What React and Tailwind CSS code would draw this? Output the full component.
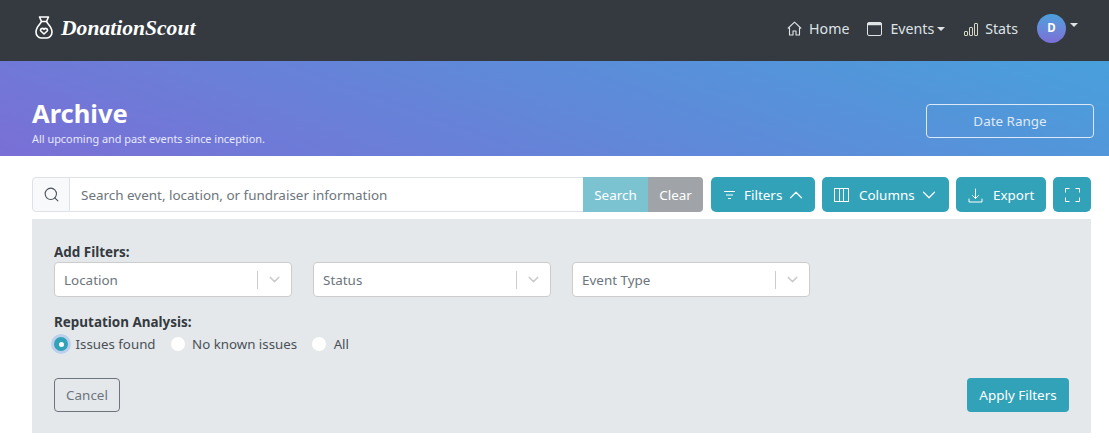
import React from "react";
import { ChevronDown, ChevronUp, Search } from "lucide-react";

const BagLogo = () => (
  <svg width="18" height="23" viewBox="0 0 18 23" fill="none" stroke="white" strokeWidth="1.6" strokeLinecap="round" strokeLinejoin="round">
    <path d="M4.500 1h9l-2 4.500h-5z" />
    <path d="M6.500 5.500c-.5 2-5.500 5-5.500 10.500 0 3.500 2.500 6 5 6h6c2.500 0 5-2.500 5-6 0-5.500-5-8.500-5.500-10.500" />
    <path d="M9 18l-3.200-3c-1.300-1.800 1.800-3.800 3.200-1.600 1.400-2.200 4.500-.2 3.200 1.600z" />
  </svg>
);

const HomeIcon = () => (
  <svg width="15" height="15" viewBox="0 0 15 15" fill="none" stroke="#dfe3e6" strokeWidth="1.1" strokeLinejoin="round">
    <path d="M.8 7.500 7.500 1.200l6.700 6.300" />
    <path d="M2.500 6.500v7.500h3.500v-4h3v4h3.500V6.500" />
  </svg>
);

const CalendarIcon = () => (
  <svg width="15" height="15" viewBox="0 0 15 15" fill="none" stroke="#dfe3e6">
    <rect x=".5" y="1.500" width="14" height="13" rx="1.500" />
    <path d="M.5 3h14" strokeWidth="2.500" />
  </svg>
);

const StatsIcon = () => (
  <svg width="14" height="14" viewBox="0 0 14 14" fill="none" stroke="#d8d6c4">
    <rect x=".5" y="9.500" width="3" height="4" rx=".5" />
    <rect x="5.500" y="5.500" width="3" height="8" rx=".5" />
    <rect x="10.500" y="1.500" width="3" height="12" rx=".5" />
  </svg>
);

const Caret = () => (
  <span className="inline-block h-0 w-0 border-x-[4.5px] border-t-[4.5px] border-x-transparent border-t-[#dfe3e6]" />
);

const FilterIcon = () => (
  <svg width="11" height="10" viewBox="0 0 11 10" fill="none" stroke="white" strokeWidth="1.2">
    <path d="M0 1.500h11M2 5h7M4 8.500h3" />
  </svg>
);

const ColumnsIcon = () => (
  <svg width="15" height="14" viewBox="0 0 15 14" fill="none" stroke="white">
    <rect x=".5" y=".5" width="14" height="13" />
    <path d="M5.500 .5v13M9.500 .5v13" />
  </svg>
);

const DownloadIcon = () => (
  <svg width="15" height="15" viewBox="0 0 15 15" fill="none" stroke="white" strokeLinecap="round" strokeLinejoin="round">
    <path d="M7.500 1v9.500M4.500 7.500l3 3 3-3" />
    <path d="M1 11v3h13v-3" />
  </svg>
);

const ExpandIcon = () => (
  <svg width="15" height="14" viewBox="0 0 15 14" fill="none" stroke="white">
    <path d="M.5 4.500V.5h4M10.500 .5h4v4M14.500 9.500v4h-4M4.500 13.500h-4v-4" />
  </svg>
);

const FilterSelect = ({ label }) => (
  <div className="flex h-[35px] w-[238px] items-center rounded border border-[#ccc] bg-white pl-[9px] pr-[8px]">
    <span className="flex-1 pt-px text-[13.44px] text-[#6c757d]">{label}</span>
    <span className="h-[18px] w-px bg-[#ccc]" />
    <ChevronDown size={17} strokeWidth={2} className="ml-[8px] text-[#ccc]" />
  </div>
);

const Radio = ({ label, checked }) => (
  <label className="flex items-center gap-[7.5px] text-[13.3px] text-[#495057]">
    {checked ? (
      <span className="flex h-[14px] w-[14px] items-center justify-center rounded-full bg-[#31a2b8] shadow-[0_0_0_3px_#bcd0ee]">
        <span className="h-[5px] w-[5px] rounded-full bg-white" />
      </span>
    ) : (
      <span className="h-[14px] w-[14px] rounded-full bg-white" />
    )}
    {label}
  </label>
);

const ToolButton = ({ children, className = "" }) => (
  <button className={`flex h-[35px] items-center rounded-[5px] bg-[#31a2b8] pt-px text-[13.44px] text-white ${className}`}>
    {children}
  </button>
);

export default function App() {
  return (
    <div className="h-[441px] overflow-hidden bg-white font-['Noto_Sans',sans-serif]">
      <nav className="flex h-[61px] items-center justify-between bg-[#343a40] pb-[5px] pl-[35px] pr-[31px]">
        <div className="flex items-center gap-[8px]">
          <BagLogo />
          <span className="font-['Liberation_Serif',serif] text-[21.6px] font-bold italic text-white">DonationScout</span>
        </div>
        <div className="flex items-center text-[14.2px] text-[#dfe3e6]">
          <span className="mt-[2px] flex items-center gap-[7px]"><HomeIcon />Home</span>
          <span className="ml-[18px] mt-[2px] flex items-center gap-[8px]">
            <CalendarIcon />
            <span className="flex items-center gap-[3px]">Events<Caret /></span>
          </span>
          <span className="ml-[19px] mt-[2px] flex items-center gap-[7px]"><StatsIcon />Stats</span>
          <span className="ml-[19px] flex h-[29px] w-[29px] items-center justify-center rounded-full bg-gradient-to-t from-[#7a6fd6] to-[#48a0db] text-[11.5px] font-bold text-white">D</span>
          <span className="mb-[6px] ml-[4px] flex"><Caret /></span>
        </div>
      </nav>

      <header className="flex h-[95px] items-end justify-between bg-[linear-gradient(20deg,#7a6fd6_0%,#48a0db_100%)] pb-[10px] pl-[32px] pr-[15px]">
        <div>
          <h1 className="text-[25.5px] font-bold leading-[35px] text-white">Archive</h1>
          <p className="text-[10.9px] leading-[15px] text-[#e6e9fa]">All upcoming and past events since inception.</p>
        </div>
        <button className="mb-[8px] h-[34px] w-[168px] rounded border border-[#dfe9f5] text-[13.44px] text-[#dfe9f5]">Date Range</button>
      </header>

      <main className="pl-[32px] pr-[18px] pt-[21px]">
        <div className="flex h-[35px] gap-[7px]">
          <div className="mr-px flex w-[671px]">
            <span className="flex w-[38px] items-center justify-center rounded-l border border-[#dee2e6] bg-[#f8f9fa]">
              <Search size={17} strokeWidth={1.5} className="text-[#495057]" />
            </span>
            <div className="flex flex-1 items-center border-y border-[#dee2e6] pl-[11px] pt-px text-[13.44px] text-[#6c757d]">
              Search event, location, or fundraiser information
            </div>
            <span className="flex w-[65px] items-center justify-center bg-[#7cc3d1] pt-px text-[13.44px] text-white">Search</span>
            <span className="flex w-[55px] items-center justify-center rounded-r bg-[#a0a4a8] pt-px text-[13.44px] text-white">Clear</span>
          </div>
          <ToolButton className="w-[104px] pl-[13px]">
            <FilterIcon />
            <span className="ml-[9px]">Filters</span>
            <ChevronUp size={22} strokeWidth={1.3} className="ml-[3px]" />
          </ToolButton>
          <ToolButton className="w-[127px] pl-[12px]">
            <ColumnsIcon />
            <span className="ml-[10px]">Columns</span>
            <ChevronDown size={22} strokeWidth={1.3} className="ml-[3px]" />
          </ToolButton>
          <ToolButton className="w-[90px] pl-[12px]">
            <DownloadIcon />
            <span className="ml-[10px]">Export</span>
          </ToolButton>
          <ToolButton className="w-[38px] justify-center"><ExpandIcon /></ToolButton>
        </div>

        <section className="mt-[7px] h-[214px] bg-[#e5e8eb] px-[22px] pt-[24px]">
          <div className="text-[13.44px] font-bold leading-[18px] text-[#343a40]">Add Filters:</div>
          <div className="mt-px flex gap-[21px]">
            <FilterSelect label="Location" />
            <FilterSelect label="Status" />
            <FilterSelect label="Event Type" />
          </div>
          <div className="mt-[16px] text-[13.44px] font-bold leading-[18px] text-[#343a40]">Reputation Analysis:</div>
          <div className="mt-[4px] flex gap-[15px] leading-[18px]">
            <Radio label="Issues found" checked />
            <Radio label="No known issues" />
            <Radio label="All" />
          </div>
          <div className="mt-[25px] flex items-center justify-between">
            <button className="h-[34px] w-[66px] rounded border border-[#6c757d] text-[13.44px] text-[#6c757d]">Cancel</button>
            <button className="h-[34px] w-[102px] rounded bg-[#31a2b8] text-[13.44px] text-white">Apply Filters</button>
          </div>
        </section>
      </main>
    </div>
  );
}
